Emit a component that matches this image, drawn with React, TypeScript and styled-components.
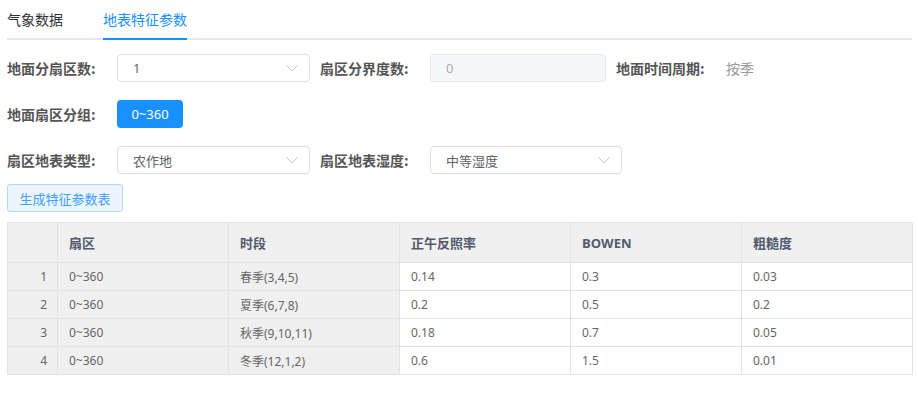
import React from 'react'
import styled, { createGlobalStyle } from 'styled-components'

const GlobalStyle = createGlobalStyle`
  body {
    margin: 0;
    background: #fff;
    font-family: "Noto Sans", "Noto Sans CJK SC", sans-serif;
  }
`

const rows = [
  { sector: '0~360', period: '春季(3,4,5)', albedo: '0.14', bowen: '0.3', rough: '0.03' },
  { sector: '0~360', period: '夏季(6,7,8)', albedo: '0.2', bowen: '0.5', rough: '0.2' },
  { sector: '0~360', period: '秋季(9,10,11)', albedo: '0.18', bowen: '0.7', rough: '0.05' },
  { sector: '0~360', period: '冬季(12,1,2)', albedo: '0.6', bowen: '1.5', rough: '0.01' },
]

const Chevron: React.FC = () => (
  <svg width="12" height="7" viewBox="0 0 12 7" fill="none">
    <path d="M0.5 0.5 L6 6 L11.5 0.5" stroke="#c0c4cc" strokeWidth="1" />
  </svg>
)

const App: React.FC = () => {
  return (
    <Page>
      <GlobalStyle />
      <Tabs>
        <Tab>气象数据</Tab>
        <Tab active>地表特征参数</Tab>
      </Tabs>

      <FormRow top={14}>
        <Item>
          <Label>地面分扇区数:</Label>
          <Select width={193}>
            <span>1</span>
            <Chevron />
          </Select>
        </Item>
        <Item>
          <Label>扇区分界度数:</Label>
          <DisabledInput>0</DisabledInput>
        </Item>
        <Item>
          <Label>地面时间周期:</Label>
          <PlainValue>按季</PlainValue>
        </Item>
      </FormRow>

      <FormRow top={18}>
        <Item>
          <Label>地面扇区分组:</Label>
          <GroupButton>0~360</GroupButton>
        </Item>
      </FormRow>

      <FormRow top={18}>
        <Item>
          <Label>扇区地表类型:</Label>
          <Select width={193}>
            <span>农作地</span>
            <Chevron />
          </Select>
        </Item>
        <Item>
          <Label>扇区地表湿度:</Label>
          <Select width={192}>
            <span>中等湿度</span>
            <Chevron />
          </Select>
        </Item>
      </FormRow>

      <GenerateButton>生成特征参数表</GenerateButton>

      <Table>
        <colgroup>
          <col style={{ width: 50 }} />
          <col style={{ width: 171 }} />
          <col style={{ width: 171 }} />
          <col style={{ width: 171 }} />
          <col style={{ width: 171 }} />
          <col style={{ width: 171 }} />
        </colgroup>
        <thead>
          <tr>
            <Th />
            <Th>扇区</Th>
            <Th>时段</Th>
            <Th>正午反照率</Th>
            <Th>BOWEN</Th>
            <Th>粗糙度</Th>
          </tr>
        </thead>
        <tbody>
          {rows.map((r, i) => (
            <tr key={i}>
              <IndexTd>{i + 1}</IndexTd>
              <Td fixed>{r.sector}</Td>
              <Td fixed>{r.period}</Td>
              <Td>{r.albedo}</Td>
              <Td>{r.bowen}</Td>
              <Td>{r.rough}</Td>
            </tr>
          ))}
        </tbody>
      </Table>
    </Page>
  )
}

const Page = styled.div`
  padding: 0 6px 0 7px;
  width: 905px;
`

const Tabs = styled.div`
  display: flex;
  gap: 40px;
  border-bottom: 2px solid #e4e7ed;
  height: 38px;
`

const Tab = styled.div<{ active?: boolean }>`
  font-size: 14px;
  line-height: 38px;
  height: 38px;
  color: ${p => (p.active ? '#1890ff' : '#303133')};
  border-bottom: 2px solid ${p => (p.active ? '#1890ff' : 'transparent')};
  font-family: "Noto Sans CJK SC", sans-serif;
`

const FormRow = styled.div<{ top: number }>`
  display: flex;
  align-items: center;
  height: 28px;
  margin-top: ${p => p.top}px;
`

const Item = styled.div`
  display: flex;
  align-items: center;
  margin-right: 10px;
`

const Label = styled.div`
  width: 110px;
  font-size: 14px;
  font-weight: bold;
  color: #555;
  font-family: "Noto Sans CJK SC", sans-serif;
`

const Select = styled.div<{ width: number }>`
  box-sizing: border-box;
  width: ${p => p.width}px;
  height: 28px;
  border: 1px solid #dcdfe6;
  border-radius: 4px;
  padding: 0 11px 0 15px;
  display: flex;
  align-items: center;
  justify-content: space-between;
  font-size: 13px;
  color: #606266;
`

const DisabledInput = styled.div`
  box-sizing: border-box;
  width: 176px;
  height: 28px;
  border: 1px solid #e4e7ed;
  background: #f5f7fa;
  border-radius: 4px;
  padding: 0 15px;
  display: flex;
  align-items: center;
  font-size: 13px;
  color: #a8abb2;
`

const PlainValue = styled.div`
  font-size: 14px;
  color: #999;
  font-family: "Noto Sans CJK SC", sans-serif;
`

const GroupButton = styled.button`
  box-sizing: border-box;
  width: 66px;
  height: 28px;
  border: none;
  border-radius: 4px;
  background: #1890ff;
  color: #fff;
  font-size: 13px;
  font-family: "Noto Sans", sans-serif;
  padding: 0;
`

const GenerateButton = styled.button`
  display: block;
  box-sizing: border-box;
  width: 116px;
  height: 28px;
  margin-top: 10px;
  border: 1px solid #b3d8ff;
  border-radius: 3px;
  background: #ecf5ff;
  color: #409eff;
  font-size: 13px;
  font-family: "Noto Sans CJK SC", sans-serif;
  padding: 0;
`

const Table = styled.table`
  margin-top: 10px;
  width: 905px;
  border-collapse: collapse;
  table-layout: fixed;
  border: 1px solid #e3e3e3;
`

const Th = styled.th`
  height: 39px;
  padding: 0 11px;
  background: #f0f0f0;
  border: 1px solid #e3e3e3;
  text-align: left;
  font-size: 13px;
  font-weight: bold;
  color: #515a6e;
  font-family: "Open Sans", "Noto Sans CJK SC", sans-serif;
`

const Td = styled.td<{ fixed?: boolean }>`
  height: 27px;
  padding: 0 11px;
  background: ${p => (p.fixed ? '#f0f0f0' : '#fff')};
  border: 1px solid #e3e3e3;
  font-size: 12px;
  color: #666;
  white-space: nowrap;
  font-family: "Noto Sans", "Noto Sans CJK SC", sans-serif;
`

const IndexTd = styled(Td).attrs({ fixed: true })`
  text-align: right;
  padding-right: 10px;
`

export default App
